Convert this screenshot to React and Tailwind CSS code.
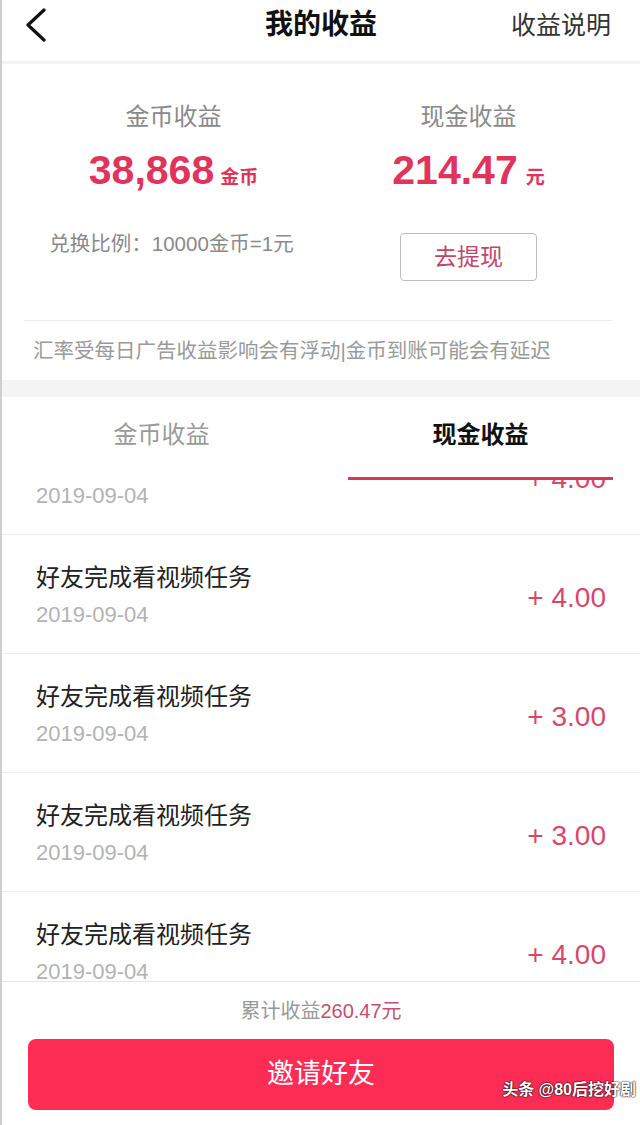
import React from "react";

const FONT = { fontFamily: '"Liberation Sans","Noto Sans CJK SC",sans-serif' };

export default function App() {
  const amounts = ["4.00", "4.00", "3.00", "3.00", "4.00"];
  return (
    <div className="relative w-[640px] h-[1125px] bg-white border-l-2 border-[#cfcfcf] overflow-hidden flex flex-col" style={FONT}>
      {/* header */}
      <div className="h-[64px] shrink-0 border-b-[3px] border-[#f2f2f2] flex items-start pt-[10px] px-[23px]">
        <div className="w-[120px] h-[30px] flex items-center">
          <svg width="22" height="34" viewBox="0 0 22 34" fill="none">
            <path d="M19 2 L3 17 L19 32" stroke="#111" strokeWidth="3.2" strokeLinecap="round" strokeLinejoin="round" />
          </svg>
        </div>
        <div className="flex-1 text-center text-[28px] leading-[30px] font-bold text-[#111]">我的收益</div>
        <div className="w-[120px] text-right pr-[6px] text-[25px] leading-[30px] text-[#333]">收益说明</div>
      </div>

      {/* stats */}
      <div className="shrink-0 grid grid-cols-2 px-[24px] pt-[40px]">
        <div className="flex flex-col items-center">
          <div className="text-[24px] leading-[26px] text-[#8a8a8a]">金币收益</div>
          <div className="mt-[16px] flex items-baseline text-[#e0345d] h-[48px]">
            <span className="text-[41px] leading-[48px] font-bold">38,868</span>
            <span className="ml-[6px] text-[19px] font-bold">金币</span>
          </div>
          <div className="mt-[39px] text-[20.5px] leading-[22px] text-[#8a8a8a] -ml-[4px] whitespace-nowrap">兑换比例：10000金币=1元</div>
        </div>
        <div className="flex flex-col items-center">
          <div className="text-[24px] leading-[26px] text-[#8a8a8a]">现金收益</div>
          <div className="mt-[16px] flex items-baseline text-[#e0345d] h-[48px]">
            <span className="text-[41px] leading-[48px] font-bold">214.47</span>
            <span className="ml-[8px] text-[19px] font-bold">元</span>
          </div>
          <div className="mt-[39px] w-[137px] h-[48px] border border-[#bdbdbd] rounded-[4px] flex items-center justify-center text-[23px] text-[#c2456e]">去提现</div>
        </div>
      </div>
      <div className="shrink-0 mt-[39px] ml-[22px] mr-[28px] h-px bg-[#ececec]" />
      <div className="shrink-0 mt-[16px] pl-[31px] text-[20.5px] leading-[28px] text-[#9a9a9a] whitespace-nowrap">汇率受每日广告收益影响会有浮动|金币到账可能会有延迟</div>
      <div className="shrink-0 mt-[15px] h-[17px] bg-[#f4f4f4]" />

      {/* tabs */}
      <div className="shrink-0 h-[83px] grid grid-cols-2 relative z-10 bg-white">
        <div className="flex flex-col items-center justify-between">
          <div className="mt-[23px] text-[24px] leading-[30px] text-[#9a9a9a]">金币收益</div>
        </div>
        <div className="flex flex-col items-center justify-between">
          <div className="mt-[23px] text-[24px] leading-[30px] font-bold text-[#111]">现金收益</div>
          <div className="w-[265px] h-[3px] bg-[#d8375c]" />
        </div>
      </div>

      {/* list */}
      <div className="flex-1 overflow-hidden">
        {amounts.map((a, i) => (
          <div key={i} className={"flex justify-between h-[119px] border-b border-[#ededed] pl-[34px] pr-[34px] " + (i === 0 ? "-mt-[64px]" : "")}>
            <div className="pt-[28px]">
              <div className="text-[24px] leading-[30px] text-[#222]">好友完成看视频任务</div>
              <div className="mt-[9px] text-[22px] leading-[26px] text-[#b3b3b3]">2019-09-04</div>
            </div>
            <div className="pt-[47px] text-[28px] leading-[32px] text-[#d8476c]">+ {a}</div>
          </div>
        ))}
      </div>

      {/* footer */}
      <div className="shrink-0 h-[144px] border-t border-[#e6e6e6] bg-white flex flex-col items-center">
        <div className="mt-[15px] text-[20px] leading-[28px] text-[#999]">
          累计收益<span className="text-[#c64f70]">260.47元</span>
        </div>
        <div className="mt-[14px] w-[586px] h-[71px] rounded-[8px] bg-[#fd2c55] flex items-center justify-center text-[27px] text-white">邀请好友</div>
      </div>

      <div className="absolute right-[4px] bottom-[24px] text-[16px] leading-[22px] font-bold text-white [text-shadow:0_0_2px_#000,0_0_1px_#000]">头条 @80后挖好剧</div>
    </div>
  );
}
